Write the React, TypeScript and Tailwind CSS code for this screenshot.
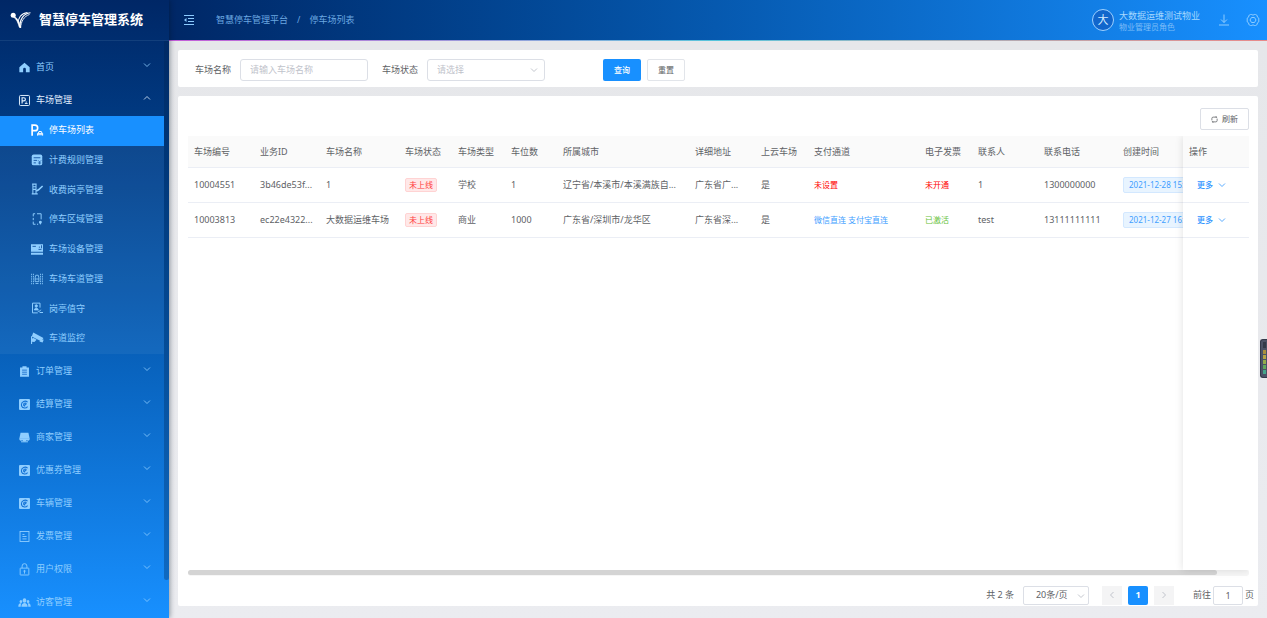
import type { ReactNode } from "react";

type IconName =
  | "home" | "lot" | "parking" | "rule" | "booth" | "area" | "device" | "lane" | "guard" | "camera"
  | "order" | "settle" | "shop" | "invoice" | "lock" | "visitor";

const ICONS: Record<IconName, ReactNode> = {
  home: <path fill="currentColor" d="M8 1 .5 7.5V15H6v-4.5a2 2 0 0 1 4 0V15h5.500V7.500z" />,
  lot: (
    <g fill="none" stroke="currentColor" strokeWidth="1.4">
      <rect x=".7" y=".7" width="14.600" height="14.600" rx="1.500" />
      <path strokeWidth="1.700" d="M4.500 12.500V4H7a2.300 2.300 0 0 1 0 4.600H4.500" />
      <path d="M8.500 12.300h4M9.500 10.300h2" />
    </g>
  ),
  parking: (
    <g fill="none" stroke="currentColor">
      <path strokeWidth="2.200" d="M1.500 15.500V1.500h3.700a3.700 3.700 0 0 1 0 7.400H1.500" />
      <path strokeWidth="1.300" d="M8.800 15.500v-3h6.700v3M9.800 12.300l.8-2.300h3.200l.8 2.300M9 14.300h6" />
    </g>
  ),
  rule: (
    <g>
      <rect x="1" y=".5" width="14" height="14.500" rx="2.500" fill="currentColor" />
      <path d="M3.500 5h9M3.500 8.500h4.500M3.500 11.800h3" stroke="#12509f" strokeWidth="1.200" />
      <path d="m9.500 8.500 2 2 2-2m-2 2V14m-2-2h4" fill="none" stroke="#12509f" strokeWidth="1" />
    </g>
  ),
  booth: (
    <g fill="none" stroke="currentColor">
      <path strokeWidth="1.400" d="M1.500 1.500h6M2.500 2v12M6.700 2v12M1 14.500h8M2.500 8.500h4M2.500 5h4" />
      <path strokeWidth="2.200" d="M7 10.800 10 9l5.500-5" />
    </g>
  ),
  area: (
    <g fill="none" stroke="currentColor" strokeWidth="1.300">
      <path d="M5.500 1H3v3.500M3 6.500v3M3 11.500V15h3M8 1h5.500v7.500M8 15h1.500" />
      <path d="M12.500 15.500 10.800 13a1.900 1.900 0 1 1 3.400 0z" fill="currentColor" stroke="none" />
    </g>
  ),
  device: (
    <g>
      <path fill="currentColor" d="M0 1.500h16v10H0zM0 13h16v2.500H0z" />
      <path d="M2 4.500h4.500M10.500 5.500h1.500M14 3v4M10 8.500h4" stroke="#1556a6" strokeWidth="1.200" />
    </g>
  ),
  lane: (
    <g fill="none" stroke="currentColor" strokeWidth="1.100">
      <path d="M.8 1v14M15.200 1v14M3.300 1v14M12.700 1v14" strokeDasharray="2 1" />
      <path d="M5.500 6.500 6.300 3h3.400l.8 3.500v5h-5zM5.500 8h5M6 14h4" />
    </g>
  ),
  guard: (
    <g fill="none" stroke="currentColor" strokeWidth="1.300">
      <path d="M12 7.500V1.500H2v13h7" />
      <circle cx="7" cy="5.300" r="1.500" fill="currentColor" />
      <path fill="currentColor" d="M4.500 10.500c0-3 5-3 5 0z" />
      <path d="M9 12.300h2.500l1.500-2M11.500 14h4.500" />
    </g>
  ),
  camera: (
    <g fill="currentColor">
      <path d="M3 .5 16.500 8 14 12.500 1 6z" />
      <path d="M0 5.500h1.500V16H0zM1.500 8.500l2-.5 4 2.200-3 3-3-.2z" />
      <path d="m11 12.500 3-2 3-.5-1.500 4z" />
    </g>
  ),
  order: (
    <g>
      <path fill="currentColor" d="M1.500 2H5V.500h6V2h3.500v13.500h-13z" />
      <path d="M4.500 6h7M4.500 9h7M4.500 12h7" stroke="#1167c8" strokeWidth="1.200" />
    </g>
  ),
  settle: (
    <g>
      <rect width="16" height="16" rx="1.500" fill="currentColor" />
      <path
        d="M12.500 4.500C9 1.500 3.500 3.800 3.500 8.200c0 5 6 6.300 9 2.800M6.500 8.500c3.500.8 5.500-2.500 2.500-2.700C6 6 5.800 10.500 9 10.300"
        fill="none"
        stroke="#1372d6"
        strokeWidth="1.500"
      />
    </g>
  ),
  shop: (
    <g fill="currentColor">
      <path d="M2.300 1h11.400L15.500 9.500H.5z" />
      <path d="M.5 9h15v2a2.300 2.300 0 0 1-4.200.500 3.500 3.500 0 0 1-6.600 0A2.300 2.300 0 0 1 .5 11z" />
      <path d="M3 13.500h10V15H3z" />
    </g>
  ),
  invoice: (
    <g fill="none" stroke="currentColor" strokeWidth="1.300">
      <rect x="1.500" y=".7" width="13" height="14.600" />
      <path d="M5 5h3M5 8h6M5 11.500h6" />
    </g>
  ),
  lock: (
    <g fill="none" stroke="currentColor" strokeWidth="1.300">
      <rect x="1.700" y="6" width="12.600" height="10" rx=".5" />
      <path d="M4.500 6V3a3.500 3.500 0 0 1 7 0v3M8 11v3" />
      <circle cx="8" cy="10.300" r="1" fill="currentColor" />
    </g>
  ),
  visitor: (
    <g fill="currentColor">
      <ellipse cx="8" cy="5" rx="2.700" ry="3.200" />
      <ellipse cx="2.800" cy="6.500" rx="1.900" ry="2.300" />
      <ellipse cx="13.200" cy="6.500" rx="1.900" ry="2.300" />
      <path d="M3.500 14c0-7 9-7 9 0zM-1 14c0-5 2.500-5.500 4.500-4.800-.8 1.300-1 2.800-1 4.800zM17 14c0-5-2.500-5.500-4.500-4.800.8 1.300 1 2.800 1 4.800z" />
    </g>
  ),
};

function Icon({ name, className = "" }: { name: IconName; className?: string }) {
  return (
    <svg viewBox="0 0 16 16" className={`shrink-0 overflow-visible ${className}`} aria-hidden="true">
      {ICONS[name]}
    </svg>
  );
}

function Chevron({ className = "", up = false }: { className?: string; up?: boolean }) {
  return (
    <svg viewBox="0 0 8 6" className={`h-[6px] w-2 shrink-0 ${className}`} fill="none" stroke="currentColor" strokeWidth="0.8" aria-hidden="true">
      <path d={up ? "M1 4.500 4 1.500 7 4.500" : "M1 1.500 4 4.500 7 1.500"} />
    </svg>
  );
}

const subMenu: { label: string; icon: IconName }[] = [
  { label: "停车场列表", icon: "parking" },
  { label: "计费规则管理", icon: "rule" },
  { label: "收费岗亭管理", icon: "booth" },
  { label: "停车区域管理", icon: "area" },
  { label: "车场设备管理", icon: "device" },
  { label: "车场车道管理", icon: "lane" },
  { label: "岗亭值守", icon: "guard" },
  { label: "车道监控", icon: "camera" },
];

const menu: { label: string; icon: IconName; open?: boolean }[] = [
  { label: "首页", icon: "home" },
  { label: "车场管理", icon: "lot", open: true },
  { label: "订单管理", icon: "order" },
  { label: "结算管理", icon: "settle" },
  { label: "商家管理", icon: "shop" },
  { label: "优惠券管理", icon: "settle" },
  { label: "车辆管理", icon: "settle" },
  { label: "发票管理", icon: "invoice" },
  { label: "用户权限", icon: "lock" },
  { label: "访客管理", icon: "visitor" },
];

const columns = [
  { title: "车场编号", col: "w-[66px]" },
  { title: "业务ID", col: "w-[66px]" },
  { title: "车场名称", col: "w-[79px]" },
  { title: "车场状态", col: "w-[53px]" },
  { title: "车场类型", col: "w-[53px]" },
  { title: "车位数", col: "w-[52px]" },
  { title: "所属城市", col: "w-[132px]" },
  { title: "详细地址", col: "w-[66px]" },
  { title: "上云车场", col: "w-[53px]" },
  { title: "支付通道", col: "w-[111px]" },
  { title: "电子发票", col: "w-[53px]" },
  { title: "联系人", col: "w-[66px]" },
  { title: "联系电话", col: "w-[79px]" },
  { title: "创建时间", col: "w-[97px]" },
];

const rows = [
  {
    id: "10004551", biz: "3b46de53f...", name: "1", status: "未上线", type: "学校", spots: "1",
    city: "辽宁省/本溪市/本溪满族自...", address: "广东省广...", cloud: "是",
    pay: "未设置", payColor: "text-[#ff0000]", invoice: "未开通", invoiceColor: "text-[#ff0000]",
    contact: "1", phone: "1300000000", created: "2021-12-28 15:42",
  },
  {
    id: "10003813", biz: "ec22e4322...", name: "大数据运维车场", status: "未上线", type: "商业", spots: "1000",
    city: "广东省/深圳市/龙华区", address: "广东省深...", cloud: "是",
    pay: "微信直连 支付宝直连", payColor: "text-[#409eff]", invoice: "已激活", invoiceColor: "text-[#67c23a]",
    contact: "test", phone: "13111111111", created: "2021-12-27 16:20",
  },
];

function Sidebar() {
  return (
    <aside className="relative z-10 flex w-[169px] shrink-0 flex-col bg-linear-to-b from-[#002766] to-[#1890ff] shadow-[1px_0_5px_rgba(0,21,41,0.4)]">
      <div className="flex h-[41px] shrink-0 items-center border-b border-[#123f7c] pl-[10px] text-white">
        <svg viewBox="0 0 22 18" className="h-[18px] w-[22px]" fill="none" stroke="currentColor" aria-hidden="true">
          <circle cx="3.200" cy="4.200" r="2.500" fill="currentColor" stroke="none" />
          <path d="M3.500 6C6 7.500 8 11 9.200 16l1.600.5C9.500 10.500 7.500 7.500 4.500 5.500z" fill="currentColor" strokeWidth=".6" />
          <path d="M10 17C9.500 9 13 2.500 20.500 1.800" strokeWidth="1.100" />
          <path d="M8.300 12.500C7.800 7 11 2.300 17.500 1.500" strokeWidth="1.100" />
          <path d="M10.500 17C11 10.500 14 5.200 19.500 3.500" strokeWidth=".9" />
        </svg>
        <h1 className="ml-[7px] text-[13px] font-bold whitespace-nowrap">智慧停车管理系统</h1>
      </div>
      <nav className="pt-[9px] pr-[5px] text-[9px] text-[#8fceff]">
        {menu.map((item) => (
          <div key={item.label}>
            <button
              type="button"
              aria-expanded={!!item.open}
              className={`flex h-[33px] w-full items-center pt-px pr-[13px] pl-[19px] ${item.open ? "text-[#e3f1ff]" : ""}`}
            >
              <Icon name={item.icon} className="h-[11px] w-[11px]" />
              <span className="ml-[6px] flex-1 text-left">{item.label}</span>
              <Chevron up={item.open} className="mb-1" />
            </button>
            {item.open && (
              <div className="grid h-[238px] grid-rows-8 bg-white/5">
                {subMenu.map((sub, i) => (
                  <a
                    key={sub.label}
                    href="#"
                    className={`flex items-center pb-[2px] pl-[31px] ${i === 0 ? "bg-[#1890ff] text-white" : ""}`}
                  >
                    <Icon name={sub.icon} className="h-3 w-3" />
                    <span className="ml-[6px]">{sub.label}</span>
                  </a>
                ))}
              </div>
            )}
          </div>
        ))}
      </nav>
      {/* 滚动条 */}
      <div className="absolute top-[41px] right-0 h-[539px] w-[5px] rounded-b bg-[#00214d]/30" />
    </aside>
  );
}

function Header() {
  return (
    <header className="h-[41px] shrink-0 bg-linear-to-r from-[#c45bd8] via-[#55c5dc] to-[#e88a8a] pb-px">
      <div className="flex h-10 items-center bg-linear-to-r from-[#002766] to-[#1890ff] pr-[7px] pl-[14px] text-[9px] text-[#8ccbff]">
        <button type="button" aria-label="收起菜单">
          <svg viewBox="0 0 12 12" className="h-3 w-3" fill="none" stroke="currentColor" aria-hidden="true">
            <path d="M1 1.500h10M5 4.500h6M5 7.500h6M1 10.500h10" />
            <path d="M3.500 4v4L1 6z" fill="currentColor" stroke="none" />
          </svg>
        </button>
        <nav className="ml-[21px] flex text-[#6ba7e0]">
          <a href="#">智慧停车管理平台</a>
          <span className="mx-[9px]">/</span>
          <a href="#">停车场列表</a>
        </nav>
        <span className="ml-auto flex h-[22px] w-[22px] items-center justify-center rounded-full border border-[#9dd0ff] bg-[#1166cc] text-[11px] text-[#d5ecff]">
          大
        </span>
        <div className="ml-[5px] pt-[2px] leading-[11px]">
          <div className="text-[#a5d8ff]">大数据运维测试物业</div>
          <div className="text-[8px] text-[#7dbdf8]">物业管理员角色</div>
        </div>
        <button type="button" aria-label="下载" className="ml-[18px]">
          <svg viewBox="0 0 12 12" className="h-3 w-3" fill="none" stroke="currentColor" aria-hidden="true">
            <path d="M6 .5v8M3 5.500l3 3 3-3M1 11h10" />
          </svg>
        </button>
        <button type="button" aria-label="设置" className="ml-4">
          <svg viewBox="0 0 14 14" className="h-[14px] w-[14px]" fill="none" stroke="currentColor" aria-hidden="true">
            <path d="M4.500 1.500h1.300l1.200.7 1.200-.7h1.300l1.700 1 .2 1.600 1.400 1v3.800l-1.400 1-.2 1.600-1.700 1H8.200L7 11.800l-1.200.7H4.500l-1.700-1-.2-1.600-1.400-1V5.100l1.400-1 .2-1.600z" />
            <path d="M5.500 4.500h3L10 7 8.500 9.500h-3L4 7z" />
          </svg>
        </button>
      </div>
    </header>
  );
}

function SearchBar() {
  return (
    <form className="flex h-[37px] items-center rounded-xs bg-white pt-[2px] pl-[17px] text-[9px]">
      <label htmlFor="lot-name" className="w-[37px]">车场名称</label>
      <input
        id="lot-name"
        placeholder="请输入车场名称"
        className="ml-2 h-[22px] w-[128px] rounded-[3px] border border-[#dcdfe6] px-[9px] outline-none placeholder:text-[#bfc3cb]"
      />
      <label htmlFor="lot-status" className="ml-[14px] w-[37px]">车场状态</label>
      <div className="relative ml-2 w-[118px]">
        <select
          id="lot-status"
          defaultValue=""
          className="block h-[22px] w-full appearance-none rounded-[3px] border border-[#dcdfe6] bg-white px-[9px] text-[#bfc3cb]"
        >
          <option value="">请选择</option>
          <option value="online">已上线</option>
          <option value="offline">未上线</option>
        </select>
        <Chevron className="pointer-events-none absolute top-2 right-[7px] text-[#b4b8c0]" />
      </div>
      <button type="button" className="ml-[58px] h-[22px] w-[38px] rounded-xs bg-[#1890ff] text-[8px] font-medium text-white">
        查询
      </button>
      <button type="button" className="ml-[6px] h-[22px] w-[38px] rounded-xs border border-[#e2e5ea] text-[8px]">
        重置
      </button>
    </form>
  );
}

function LotTable() {
  return (
    <div className="flex min-h-0 flex-1 text-[9px]">
      <div className="min-w-0 flex-1 overflow-hidden">
        <table className="w-[1026px] table-fixed text-left whitespace-nowrap">
          <colgroup>
            {columns.map((c) => (
              <col key={c.title} className={c.col} />
            ))}
          </colgroup>
          <thead className="bg-[#fafafa]">
            <tr className="h-[31px] border-b border-[#ebeef5]">
              {columns.map((c) => (
                <th key={c.title} className="pl-[6px] font-normal">{c.title}</th>
              ))}
            </tr>
          </thead>
          <tbody>
            {rows.map((r) => (
              <tr key={r.id} className="h-[35px] border-b border-[#ebeef5] *:pl-[6px]">
                <td>{r.id}</td>
                <td>{r.biz}</td>
                <td>{r.name}</td>
                <td>
                  <span className="flex h-[14px] w-8 items-center justify-center rounded-xs border border-[#ffd3d3] bg-[#ffe8e8] text-[8px] text-[#ff3b3b]">
                    {r.status}
                  </span>
                </td>
                <td>{r.type}</td>
                <td>{r.spots}</td>
                <td>{r.city}</td>
                <td>{r.address}</td>
                <td>{r.cloud}</td>
                <td className={`text-[8px] ${r.payColor}`}>{r.pay}</td>
                <td className={`text-[8px] ${r.invoiceColor}`}>{r.invoice}</td>
                <td>{r.contact}</td>
                <td>{r.phone}</td>
                <td>
                  <span className="flex h-4 w-fit items-center rounded-xs border border-[#d3e8ff] bg-[#e8f4ff] px-[5px] text-[8px] text-[#409eff]">
                    {r.created}
                  </span>
                </td>
              </tr>
            ))}
          </tbody>
        </table>
      </div>
      {/* 固定操作列 */}
      <div className="relative w-[66px] shrink-0 bg-white shadow-[0_0_8px_rgba(0,0,0,0.12)] [clip-path:inset(0_0_-8px_-8px)]">
        <table className="w-full text-left">
          <thead className="bg-[#fafafa]">
            <tr className="h-[31px] border-b border-[#ebeef5]">
              <th className="pl-[6px] font-normal">操作</th>
            </tr>
          </thead>
          <tbody>
            {rows.map((r) => (
              <tr key={r.id} className="h-[35px] border-b border-[#ebeef5]">
                <td className="pl-[14px]">
                  <button type="button" className="flex items-center gap-[5px] text-[8px] font-medium text-[#2f95ff]">
                    更多
                    <Chevron />
                  </button>
                </td>
              </tr>
            ))}
          </tbody>
        </table>
      </div>
    </div>
  );
}

function Pagination() {
  return (
    <div className="flex h-[22px] shrink-0 items-center justify-end pr-1 text-[9px]">
      <span>共 2 条</span>
      <div className="relative ml-[9px] w-[66px]">
        <select
          aria-label="每页条数"
          className="block h-[19px] w-full appearance-none rounded-xs border border-[#dcdfe6] bg-white pl-[12px]"
        >
          <option>20条/页</option>
          <option>50条/页</option>
        </select>
        <Chevron className="pointer-events-none absolute top-[7px] right-1 text-[#b4b8c0]" />
      </div>
      <button type="button" aria-label="上一页" className="ml-[13px] flex h-[19px] w-5 items-center justify-center bg-[#f4f4f5] text-[#b4b8c0]">
        <Chevron className="rotate-90" />
      </button>
      <button type="button" className="ml-[6px] h-[19px] w-5 rounded-xs bg-[#1890ff] font-bold text-white">1</button>
      <button type="button" aria-label="下一页" className="ml-[6px] flex h-[19px] w-5 items-center justify-center bg-[#f4f4f5] text-[#b4b8c0]">
        <Chevron className="-rotate-90" />
      </button>
      <label htmlFor="page-no" className="ml-[19px]">前往</label>
      <input
        id="page-no"
        defaultValue="1"
        className="mr-[2px] ml-[2px] h-[19px] w-[30px] rounded-xs border border-[#dcdfe6] text-center"
      />
      <span>页</span>
    </div>
  );
}

export default function App() {
  return (
    <div className="relative flex min-h-screen overflow-hidden bg-[#ebecf0] font-['Noto_Sans','Noto_Sans_CJK_SC',sans-serif] text-[#606266]">
      <Sidebar />
      <div className="flex min-w-0 flex-1 flex-col">
        <Header />
        <main className="flex flex-1 flex-col gap-[9px] bg-linear-to-b from-[#e6e7ea] to-[#ebecf0] px-[9px] pt-[9px] pb-3">
          <SearchBar />
          <section className="flex min-h-0 flex-1 flex-col rounded-xs bg-white pt-3">
            <div className="flex justify-end pr-[9px] pb-[6px]">
              <button type="button" className="flex h-[22px] w-[49px] items-center justify-center gap-1 rounded-xs border border-[#dcdfe6] text-[8px]">
                <svg viewBox="0 0 8 8" className="h-[7px] w-[7px]" fill="none" stroke="currentColor" strokeWidth="0.9" aria-hidden="true">
                  <path d="M1 5V2.800A1.500 1.500 0 0 1 2.500 1.300H6.500M5.500.3l1 1-1 1M7 3v2.200a1.500 1.500 0 0 1-1.500 1.500H1.500M2.500 5.700l-1 1 1 1" />
                </svg>
                刷新
              </button>
            </div>
            <div className="flex flex-1 flex-col pr-[9px] pl-[10px]">
              <LotTable />
              <div className="h-[6px] rounded-full bg-[#f6f6f6]">
                <div className="h-[5px] w-[97%] rounded-full bg-[#d4d4d4]" />
              </div>
            </div>
            <div className="pt-2">
              <Pagination />
            </div>
          </section>
        </main>
      </div>
      {/* 右侧悬浮条 */}
      <div className="absolute top-[339px] right-0 flex h-[39px] w-[7px] flex-col items-center justify-end gap-px rounded-l-[3px] border border-r-0 border-[#34394a] bg-[#4c5266] pb-[3px]">
        <span className="mb-px h-[6px] w-[3px] bg-[#343a49]" />
        <span className="h-1 w-[3px] bg-[#a98f3c]" />
        <span className="h-1 w-[3px] bg-[#b5a544]" />
        <span className="h-1 w-[3px] bg-[#94ab4a]" />
        <span className="h-1 w-[3px] bg-[#62a85c]" />
        <span className="h-1 w-[3px] bg-[#46a58a]" />
      </div>
    </div>
  );
}
